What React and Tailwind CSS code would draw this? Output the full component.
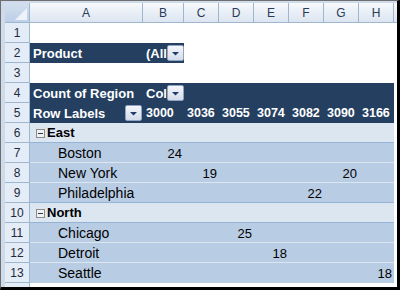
import React from "react";

const COLW = [113, 41, 35, 35, 35, 35, 35, 35];
const LETTERS = ["A", "B", "C", "D", "E", "F", "G", "H"];

function DropBtn() {
  return (
    <div className="w-[17px] h-[16px] shrink-0 rounded-[2px] border border-[#8fa4c2] bg-gradient-to-b from-[#f4f7fb] to-[#d3dcea] flex items-center justify-center">
      <svg width="7" height="5" viewBox="0 0 7 5">
        <path d="M0 1H7L3.5 4.5Z" fill="#1f3b6a" />
      </svg>
    </div>
  );
}

function RowHead({ n, h = "h-[20px]" }) {
  return (
    <div className={`w-[25px] ${h} shrink-0 bg-[#e4ecf7] border-r border-b border-[#9eb6ce] flex items-center justify-center text-[12px] text-[#1f2a3a]`}>
      {n}
    </div>
  );
}

function Minus() {
  return (
    <div className="w-[9px] h-[9px] shrink-0 border border-[#8a8a8a] bg-[#eef2f8] flex items-center justify-center">
      <div className="w-[5px] h-px bg-[#333]" />
    </div>
  );
}

function Row({ n, children, bg = "", sep = "" }) {
  return (
    <div className="flex h-[20px]">
      <RowHead n={n} />
      <div className={`flex w-[365px] h-[20px] ${bg} ${sep}`}>{children}</div>
    </div>
  );
}

function Blank() {
  return <div className="flex-1" />;
}

function ValueCells({ values, bg }) {
  // values: array of 7 (B..H)
  return COLW.slice(1).map((w, i) => (
    <div
      key={i}
      style={{ width: w }}
      className="shrink-0 flex items-center justify-end pr-[2px] pt-[2px] text-[13px] text-black"
    >
      {values[i] ?? ""}
    </div>
  ));
}

function CityRow({ n, name, values, sep }) {
  return (
    <Row n={n} bg="bg-[#b8cce4]">
      <div className={`flex w-[364px] h-[20px] border-b ${sep}`}>
        <div className="w-[113px] shrink-0 flex items-center pl-[28px] pt-[1px] text-[14px] text-black">
          {name}
        </div>
        <ValueCells values={values} />
      </div>
      <div className="flex-1 bg-white" />
    </Row>
  );
}

function GroupRow({ n, name }) {
  return (
    <Row n={n}>
      <div className="flex w-[364px] h-[20px] bg-[#dce6f1] border-b border-[#95b3d7] items-center pl-[6px] gap-[2px] pt-[1px]">
        <Minus />
        <span className="text-[13px] font-bold text-black">{name}</span>
      </div>
      <div className="flex-1 bg-white" />
    </Row>
  );
}

export default function App() {
  return (
    <div className="w-[400px] h-[290px] overflow-hidden bg-white border-l border-t border-[#6e6e6e] border-r-[3px] border-r-black border-b-[3px] border-b-black font-['Liberation_Sans',Arial,sans-serif]">
      <div className="flex flex-col pl-[4px] pt-[2px] bg-[#cfdbea] h-full">
        {/* column header */}
        <div className="flex h-[20px]">
          <div className="w-[25px] h-[20px] shrink-0 bg-gradient-to-b from-[#d3dfee] to-[#bccfe7] border-r border-b border-[#9eb6ce] flex items-end justify-end pr-[2px] pb-[2px]">
            <svg width="12" height="12" viewBox="0 0 12 12">
              <path d="M12 0V12H0Z" fill="#eef3fa" />
            </svg>
          </div>
          {COLW.map((w, i) => (
            <div
              key={i}
              style={{ width: w }}
              className="h-[20px] shrink-0 bg-gradient-to-b from-[#f6f9fc] to-[#dce5f1] border-r border-b border-[#9eb6ce] flex items-center justify-center text-[12px] text-[#2a3a55]"
            >
              {LETTERS[i]}
            </div>
          ))}
          <div className="flex-1 h-[20px] bg-gradient-to-b from-[#f6f9fc] to-[#dce5f1] border-b border-[#9eb6ce]" />
        </div>

        <div className="flex flex-col bg-white">
          <Row n={1} />

          <Row n={2}>
            <div className="w-[113px] shrink-0 bg-[#243f60] flex items-center pl-[3px] pt-[1px] text-[13px] font-bold text-white">
              Product
            </div>
            <div className="w-[41px] shrink-0 bg-[#243f60] flex items-center">
              <div className="flex-1 overflow-hidden whitespace-nowrap pl-[3px] pt-[1px] text-[13px] font-bold text-white">
                (All)
              </div>
              <DropBtn />
            </div>
            <Blank />
          </Row>

          <Row n={3} />

          <Row n={4}>
            <div className="flex w-[364px] h-[20px] bg-[#243f60]">
              <div className="w-[113px] shrink-0 flex items-center pl-[3px] pt-[1px] text-[13px] font-bold text-white whitespace-nowrap">
                Count of Region
              </div>
              <div className="w-[41px] shrink-0 flex items-center">
                <div className="flex-1 overflow-hidden whitespace-nowrap pl-[3px] pt-[1px] text-[13px] font-bold text-white">
                  Column Labels
                </div>
                <DropBtn />
              </div>
            </div>
            <Blank />
          </Row>

          <Row n={5}>
            <div className="flex w-[364px] h-[20px] bg-[#243f60]">
              <div className="w-[113px] shrink-0 flex items-center pl-[3px] pr-[1px] text-[13px] font-bold text-white whitespace-nowrap">
                <span className="flex-1 pt-[1px]">Row Labels</span>
                <DropBtn />
              </div>
              {["3000", "3036", "3055", "3074", "3082", "3090", "3166"].map((t, i) => (
                <div
                  key={t}
                  style={{ width: COLW[i + 1] }}
                  className="shrink-0 flex items-center pl-[3px] pt-[1px] text-[12.5px] font-bold text-white"
                >
                  {t}
                </div>
              ))}
            </div>
            <Blank />
          </Row>

          <GroupRow n={6} name="East" />
          <CityRow n={7} name="Boston" values={["24"]} sep="border-[#dce6f1]" />
          <CityRow n={8} name="New York" values={["", "19", "", "", "", "20"]} sep="border-[#dce6f1]" />
          <CityRow n={9} name="Philadelphia" values={["", "", "", "", "22"]} sep="border-[#95b3d7]" />
          <GroupRow n={10} name="North" />
          <CityRow n={11} name="Chicago" values={["", "", "25"]} sep="border-[#dce6f1]" />
          <CityRow n={12} name="Detroit" values={["", "", "", "18"]} sep="border-[#dce6f1]" />
          <CityRow n={13} name="Seattle" values={["", "", "", "", "", "", "18"]} sep="border-transparent" />

          <div className="flex h-[4px]">
            <div className="w-[25px] h-[4px] shrink-0 bg-[#e4ecf7] border-r border-[#9eb6ce]" />
            <div className="flex-1" />
          </div>
        </div>
      </div>
    </div>
  );
}
